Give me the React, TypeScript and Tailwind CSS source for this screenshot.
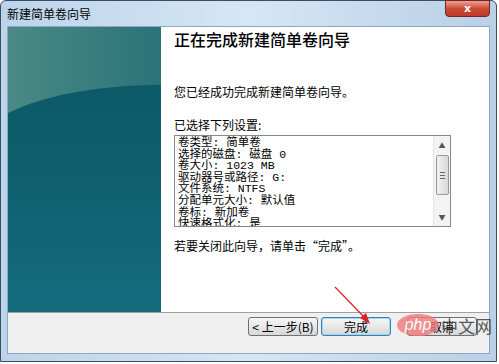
import React from 'react';

const settings = [
  '卷类型: 简单卷',
  '选择的磁盘: 磁盘 0',
  '卷大小: 1023 MB',
  '驱动器号或路径: G:',
  '文件系统: NTFS',
  '分配单元大小: 默认值',
  '卷标: 新加卷',
  '快速格式化: 是',
];

const WizardButton: React.FC<{ label: string; focused?: boolean }> = ({ label, focused }) => (
  <button
    className={
      'h-[19px] w-[70px] rounded-[3px] text-[12px] leading-none text-black bg-gradient-to-b from-[#f6f6f6] via-[#e8e8e8] to-[#d8d8d8] ' +
      (focused ? 'border border-[#3c7fb1] shadow-[inset_0_0_0_1px_#9fd6f5]' : 'border border-[#707070]')
    }
  >
    {label}
  </button>
);

export default function App() {
  return (
    <div className="relative w-[499px] h-[364px] overflow-hidden bg-white font-['Noto_Sans_CJK_SC','Noto_Sans',sans-serif]">
      {/* Window frame */}
      <div className="flex flex-col w-[497px] h-[362px] rounded-t-[6px] border border-[#3a4d63] bg-gradient-to-r from-[#bcd4ea] via-[#d6e6f4] to-[#b9d0e7]">
        {/* Title bar */}
        <div className="relative flex items-center h-[25px] pl-[6px] shrink-0">
          <span className="text-[12px] text-black leading-none">新建简单卷向导</span>
          <div className="absolute right-[6px] top-[-1px] w-[45px] h-[17px] rounded-b-[4px] border border-[#6d2a23] bg-gradient-to-b from-[#e8a093] via-[#cc4a37] to-[#c0392a] flex items-center justify-center">
            <span className="text-white text-[11px] font-bold leading-none font-['DejaVu_Sans',sans-serif]">x</span>
          </div>
        </div>

        {/* Client area */}
        <div className="flex flex-col mx-[6px] border border-[#8ea7c2] bg-[#f0f0f0] h-[328px]">
          <div className="flex h-[285px] shrink-0">
            {/* Left teal panel */}
            <div className="relative w-[153px] shrink-0 overflow-hidden bg-gradient-to-b from-[#0c5764] via-[#0e5f6d] to-[#136c7e]">
              <svg className="absolute inset-0" width="153" height="285" viewBox="0 0 153 285">
                <defs>
                  <linearGradient id="topg" x1="0" y1="0" x2="1" y2="0">
                    <stop offset="0" stopColor="#4a8a86" />
                    <stop offset="1" stopColor="#2b7279" />
                  </linearGradient>
                </defs>
                <path d="M0 0 H153 V58 C100 58 40 66 0 86 Z" fill="url(#topg)" />
              </svg>
            </div>
            {/* Right white panel */}
            <div className="flex-1 bg-white pl-[13px] pr-[38px] pt-[2px]">
              <h1 className="text-[16px] leading-[20px] text-black font-medium">正在完成新建简单卷向导</h1>
              <p className="mt-[35px] text-[12px] leading-[16px] text-black">您已经成功完成新建简单卷向导。</p>
              <p className="mt-[17px] text-[12px] leading-[16px] text-black">已选择下列设置:</p>
              <div className="mt-[2px] flex h-[92px] border border-[#828790] bg-white">
                <div className="flex-1 overflow-hidden pl-[3px] pt-[1px] font-['Liberation_Mono','Noto_Sans_CJK_SC',monospace]">
                  {settings.map((s) => (
                    <div key={s} className="text-[11.5px] leading-[11.6px] text-black whitespace-nowrap">
                      {s}
                    </div>
                  ))}
                </div>
                <div className="flex flex-col w-[17px] bg-[#f3f3f3] border-l border-[#e6e6e6] py-[1px] items-center">
                  <div className="h-[16px] flex items-center justify-center text-[#555] text-[7px] leading-none">▲</div>
                  <div className="mt-[2px] w-[13px] h-[40px] rounded-[2px] border border-[#9a9a9a] bg-gradient-to-r from-[#f2f2f2] to-[#d9d9d9] flex flex-col items-center justify-center gap-[2px]">
                    <div className="w-[5px] h-px bg-[#666]" />
                    <div className="w-[5px] h-px bg-[#666]" />
                    <div className="w-[5px] h-px bg-[#666]" />
                  </div>
                  <div className="flex-1" />
                  <div className="h-[16px] flex items-center justify-center text-[#555] text-[7px] leading-none">▼</div>
                </div>
              </div>
              <p className="mt-[11px] text-[12px] leading-[16px] text-black">若要关闭此向导，请单击“完成”。</p>
            </div>
          </div>
          <div className="h-px bg-[#a0a0a0] shrink-0" />
          <div className="flex-1 flex items-start justify-end pr-[12px] gap-[3px] pt-[4px]">
            <WizardButton label="< 上一步(B)" />
            <WizardButton label="完成" focused />
            <div className="w-[10px]" />
            <WizardButton label="取消" />
          </div>
        </div>
      </div>

      {/* Red annotation arrow */}
      <svg className="absolute left-0 top-0 pointer-events-none" width="499" height="364">
        <line x1="335" y1="287" x2="366" y2="319" stroke="#e02020" strokeWidth="1.2" />
        <path d="M370 324 L360 318 L366 313 Z" fill="#e02020" />
      </svg>

      {/* Watermark */}
      <div className="absolute left-[397px] top-[314px] flex items-center opacity-80 pointer-events-none">
        <div className="w-[42px] h-[22px] rounded-[50%] bg-[#f07a7a] flex items-center justify-center">
          <span className="text-white italic text-[16px] leading-none font-['Liberation_Sans',sans-serif]">php</span>
        </div>
        <span className="ml-[2px] text-[17px] leading-none text-[#333] font-['Noto_Sans_CJK_SC',sans-serif]">中文网</span>
      </div>
    </div>
  );
}
